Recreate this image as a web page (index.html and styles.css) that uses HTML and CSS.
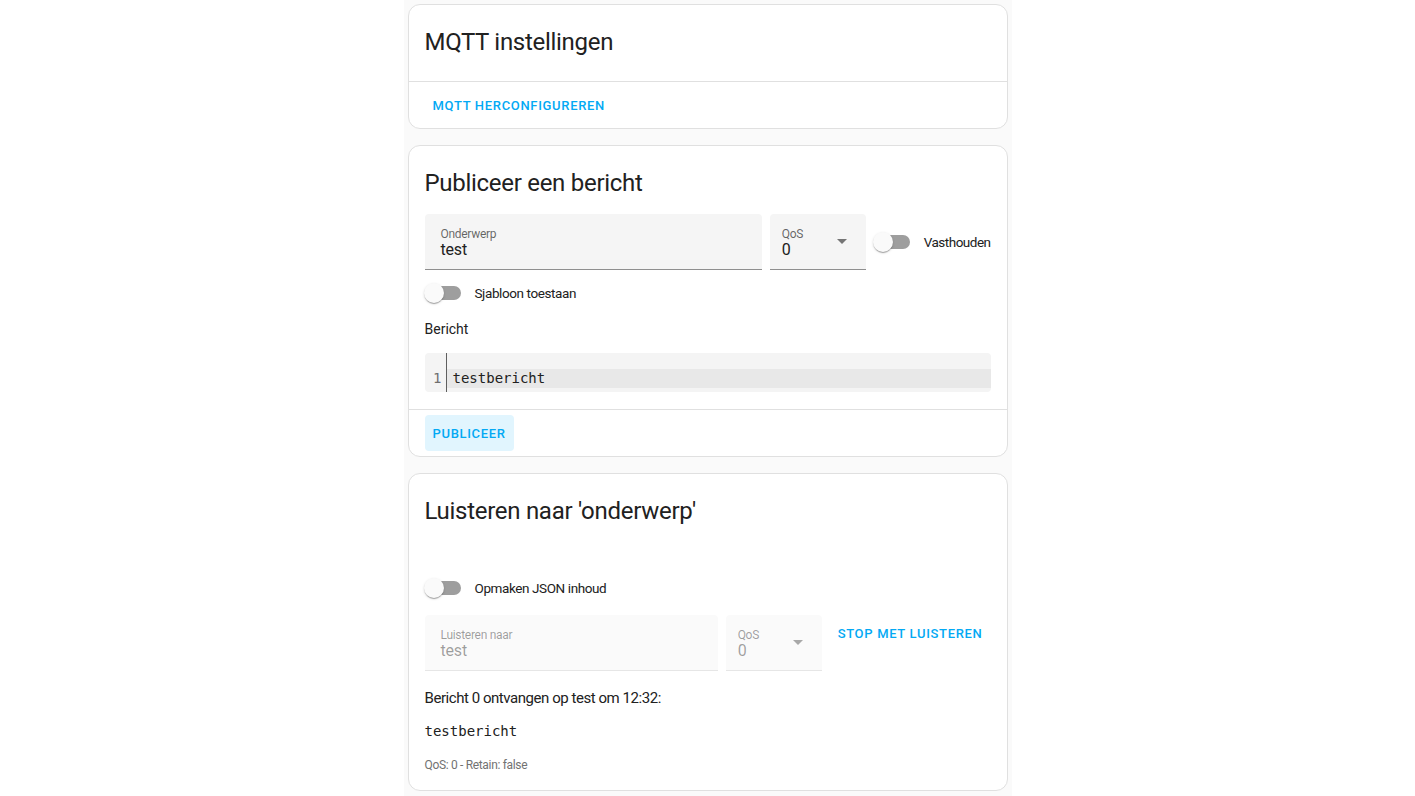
FILE: index.html
```html
<!DOCTYPE html>
<html lang="nl">
  <head>
    <meta charset="UTF-8" />
    <meta name="viewport" content="width=device-width, initial-scale=1.0" />
    <title>MQTT instellingen</title>
    <link rel="stylesheet" href="styles.css">
  </head>
  <body>
    <div class="column">
      <div class="card">
        <h1 class="card-header">MQTT instellingen</h1>
        <div class="card-actions">
          <button class="text-btn">MQTT herconfigureren</button>
        </div>
      </div>

      <div class="card">
        <h1 class="card-header">Publiceer een bericht</h1>
        <div class="card-content publish">
          <div class="field-row">
            <div class="textfield grow">
              <span class="field-label">Onderwerp</span>
              <span class="field-value">test</span>
            </div>
            <div class="textfield select">
              <span class="field-label">QoS</span>
              <span class="field-value">0</span>
              <span class="arrow"></span>
            </div>
            <label class="formfield">
              <span class="switch"><span class="thumb"></span></span>
              <span class="switch-label narrow">Vasthouden</span>
            </label>
          </div>

          <label class="formfield switch-row">
            <span class="switch"><span class="thumb"></span></span>
            <span class="switch-label">Sjabloon toestaan</span>
          </label>

          <p class="payload-label">Bericht</p>

          <div class="code-editor">
            <div class="gutter"><span>1</span></div>
            <div class="code-lines">
              <div class="code-line active">testbericht</div>
            </div>
          </div>
        </div>
        <div class="card-actions">
          <button class="text-btn tonal">Publiceer</button>
        </div>
      </div>

      <div class="card">
        <h1 class="card-header">Luisteren naar 'onderwerp'</h1>
        <div class="card-content listen">
          <div class="spacer"></div>
          <label class="formfield switch-row json-row">
            <span class="switch"><span class="thumb"></span></span>
            <span class="switch-label">Opmaken JSON inhoud</span>
          </label>

          <div class="field-row top">
            <div class="textfield grow disabled">
              <span class="field-label">Luisteren naar</span>
              <span class="field-value">test</span>
            </div>
            <div class="textfield select disabled">
              <span class="field-label">QoS</span>
              <span class="field-value">0</span>
              <span class="arrow"></span>
            </div>
            <button class="text-btn">Stop met luisteren</button>
          </div>

          <div class="message">
            <p class="message-title">Bericht 0 ontvangen op test om 12:32:</p>
            <pre class="message-body">testbericht</pre>
            <p class="message-meta">QoS: 0 - Retain: false</p>
          </div>
        </div>
      </div>
    </div>
  </body>
</html>
```

FILE: styles.css
```css
html,
body {
  margin: 0;
  height: 100%;
  background-color: #ffffff;
}
body {
  font-family: Roboto, "Noto Sans", "Liberation Sans", sans-serif;
  color: #212121;
}
.column {
  width: 600px;
  min-height: 100%;
  margin: 0 auto;
  padding: 4px 4px 0;
  background-color: #fafafa;
  box-sizing: content-box;
}
.card {
  background: #ffffff;
  border: 1px solid #e0e0e0;
  border-radius: 12px;
  margin-bottom: 16px;
  overflow: hidden;
}
.card-header {
  margin: 0;
  padding: 13px 16px 15px;
  font-size: 24px;
  font-weight: 400;
  line-height: 48px;
  letter-spacing: -0.012em;
  color: #212121;
}
.card-content {
  margin-top: -8px;
  padding: 0 16px 16px;
}
.card-actions {
  border-top: 1px solid #e0e0e0;
  padding: 5px 16px;
  display: flex;
}
.text-btn {
  height: 36px;
  padding: 0 8px;
  border: none;
  border-radius: 4px;
  background: transparent;
  color: #03a9f4;
  font-family: Roboto, "Noto Sans", sans-serif;
  font-size: 13px;
  font-weight: 500;
  letter-spacing: 0.68px;
  text-transform: uppercase;
  cursor: pointer;
}
.text-btn.tonal {
  background: #e1f5fe;
}

/* text fields */
.field-row {
  display: flex;
  align-items: center;
  gap: 8px;
}
.field-row.top {
  align-items: flex-start;
  margin-top: 5px;
}
.textfield {
  position: relative;
  height: 56px;
  box-sizing: border-box;
  padding: 0 16px;
  background: #f5f5f5;
  border-radius: 4px 4px 0 0;
  border-bottom: 1px solid #8f8f8f;
  display: flex;
  flex-direction: column;
}
.textfield.grow {
  flex: 1;
}
.textfield.select {
  width: 96px;
  padding: 0 12px;
}
.field-label {
  margin-top: 13px;
  font-size: 12px;
  line-height: 14px;
  letter-spacing: -0.3px;
  color: rgba(0, 0, 0, 0.6);
}
.field-value {
  margin-top: -2px;
  font-size: 16px;
  line-height: 22px;
  letter-spacing: -0.2px;
  color: #212121;
}
.arrow {
  position: absolute;
  right: 19px;
  top: 25px;
  width: 0;
  height: 0;
  border-left: 5px solid transparent;
  border-right: 5px solid transparent;
  border-top: 5px solid #757575;
}
.textfield.disabled {
  background: #fafafa;
  border-bottom-color: #e6e6e6;
}
.textfield.disabled .field-label,
.textfield.disabled .field-value {
  color: rgba(0, 0, 0, 0.38);
}
.textfield.disabled .arrow {
  border-top-color: #a8a8a8;
}

/* switches */
.formfield {
  display: flex;
  align-items: center;
  gap: 14px;
}
.switch {
  position: relative;
  flex: none;
  width: 36px;
  height: 14px;
  border-radius: 7px;
  background: #9e9e9e;
}
.thumb {
  position: absolute;
  left: -1px;
  top: -3px;
  width: 20px;
  height: 20px;
  border-radius: 50%;
  background: #fafafa;
  box-shadow: 0 2px 1px -1px rgba(0, 0, 0, 0.2), 0 1px 1px rgba(0, 0, 0, 0.14),
    0 1px 3px rgba(0, 0, 0, 0.12);
}
.switch-label {
  font-size: 13.5px;
  line-height: 20px;
  letter-spacing: -0.4px;
  color: #212121;
}
.switch-label.narrow {
  letter-spacing: -0.5px;
}
.switch-row {
  height: 46px;
}
.json-row {
  height: 44px;
}
.spacer {
  height: 24px;
}

/* publish */
.payload-label {
  margin: 3px 0 14px;
  font-size: 14px;
  line-height: 20px;
}
.code-editor {
  display: flex;
  background: #f4f4f4;
  border-radius: 4px;
  font-family: "DejaVu Sans Mono", "Liberation Mono", monospace;
  font-size: 14px;
  line-height: 19px;
}
.gutter {
  width: 21px;
  padding: 16px 0 4px;
  border-right: 1px solid #5f5f5f;
  color: #6f6f6f;
  text-align: right;
  box-sizing: content-box;
}
.gutter span {
  display: block;
  padding-right: 4px;
}
.code-lines {
  flex: 1;
  padding: 16px 0 4px;
}
.code-line {
  padding-left: 6px;
  color: #212121;
}
.code-line.active {
  background: #e8e8e8;
}
.publish {
  padding-bottom: 17px;
}

/* listen */
.message-title {
  margin: 15px 0 0;
  font-size: 15px;
  line-height: 24px;
  letter-spacing: -0.45px;
}
.message-body {
  margin: 11px 0 0;
  font-family: "DejaVu Sans Mono", "Liberation Mono", monospace;
  font-size: 14px;
  line-height: 20px;
  color: #212121;
}
.message-meta {
  margin: 16px 0 0;
  font-size: 12px;
  line-height: 16px;
  letter-spacing: -0.33px;
  color: #727272;
}
.listen {
  padding-bottom: 17px;
}
```
